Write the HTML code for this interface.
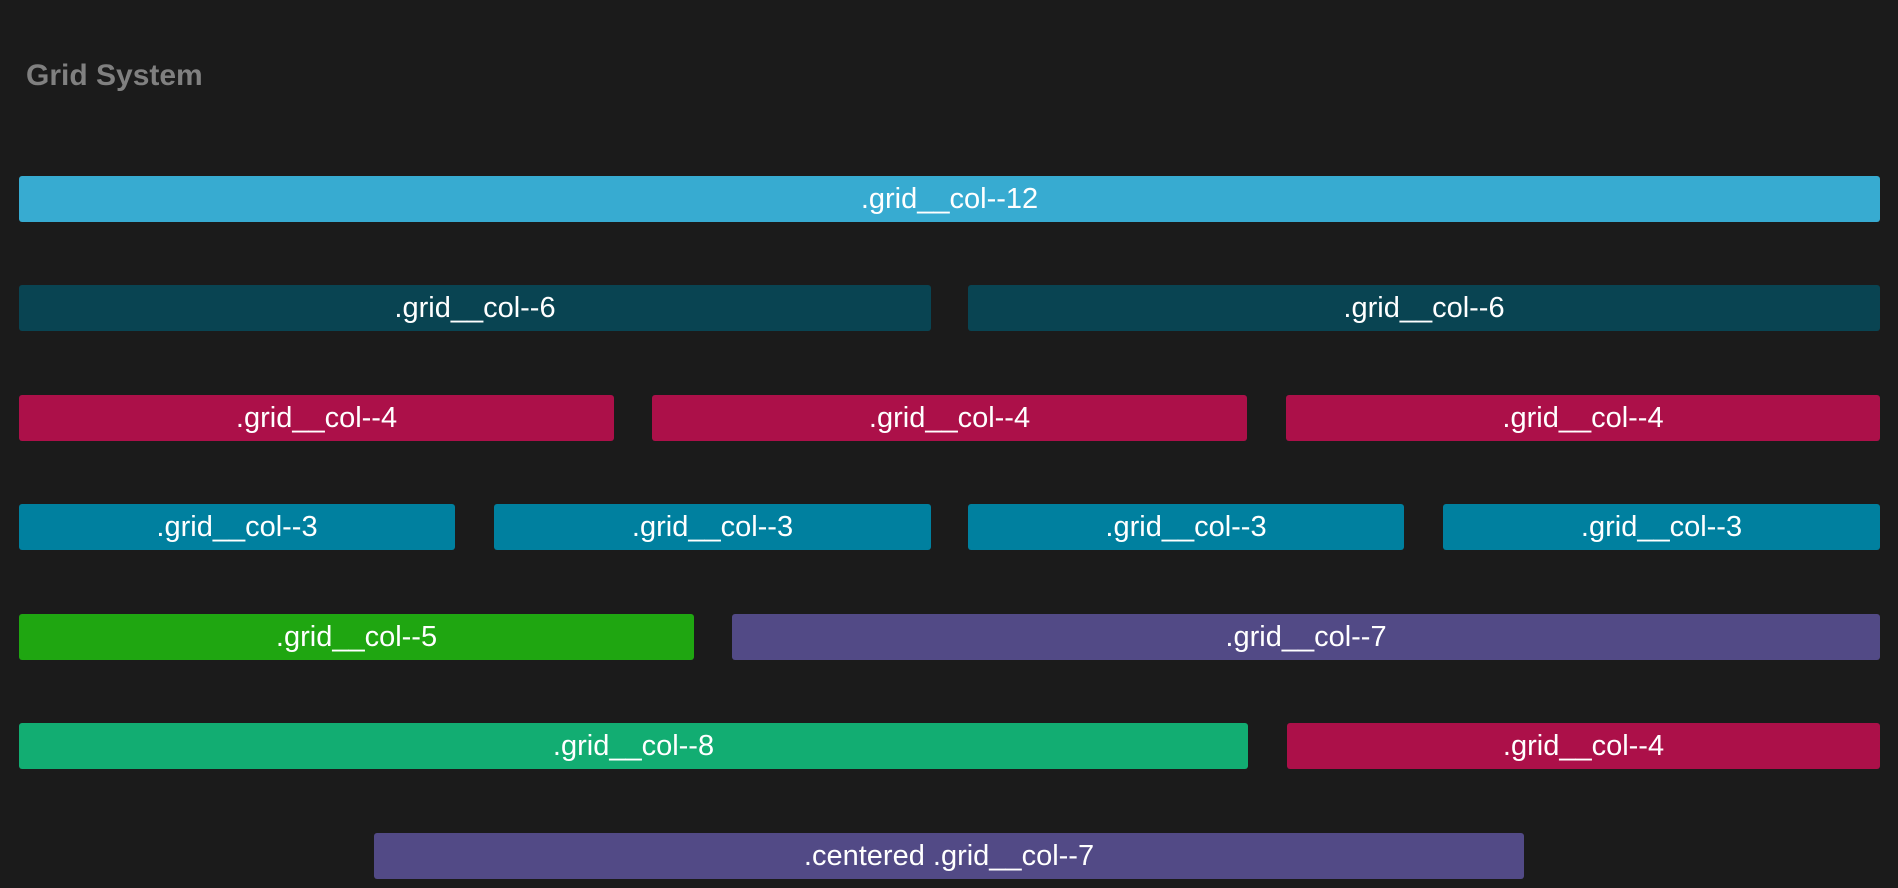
<!DOCTYPE html>
<html><head><meta charset="utf-8"><style>
html,body{margin:0;padding:0;background:#1b1b1b;width:1898px;height:888px;overflow:hidden;font-family:"Liberation Sans",Arial,sans-serif}
h1{position:absolute;left:26px;top:61px;margin:0;font-size:30px;line-height:29px;font-weight:bold;color:#808080}
.b{position:absolute;height:46px;line-height:46px;color:#fff;font-size:29px;text-align:center;border-radius:3px}
.c12{background:#37abd1}.c6{background:#094452}.c4{background:#ac1049}.c3{background:#00809f}.c5{background:#1fa611}.c7{background:#524a86}.c8{background:#12ad72}
</style></head><body>
<h1>Grid System</h1>
<div class="b c12" style="left:19px;width:1861px;top:176px">.grid__col--12</div>

<div class="b c6" style="left:19px;width:912px;top:285px">.grid__col--6</div>
<div class="b c6" style="left:968px;width:912px;top:285px">.grid__col--6</div>

<div class="b c4" style="left:19px;width:595px;top:395px">.grid__col--4</div>
<div class="b c4" style="left:652px;width:595px;top:395px">.grid__col--4</div>
<div class="b c4" style="left:1286px;width:594px;top:395px">.grid__col--4</div>

<div class="b c3" style="left:19px;width:436px;top:504px">.grid__col--3</div>
<div class="b c3" style="left:494px;width:437px;top:504px">.grid__col--3</div>
<div class="b c3" style="left:968px;width:436px;top:504px">.grid__col--3</div>
<div class="b c3" style="left:1443px;width:437px;top:504px">.grid__col--3</div>

<div class="b c5" style="left:19px;width:675px;top:614px">.grid__col--5</div>
<div class="b c7" style="left:732px;width:1148px;top:614px">.grid__col--7</div>

<div class="b c8" style="left:19px;width:1229px;top:723px">.grid__col--8</div>
<div class="b c4" style="left:1287px;width:593px;top:723px">.grid__col--4</div>

<div class="b c7" style="left:374px;width:1150px;top:833px">.centered .grid__col--7</div>
</body></html>
